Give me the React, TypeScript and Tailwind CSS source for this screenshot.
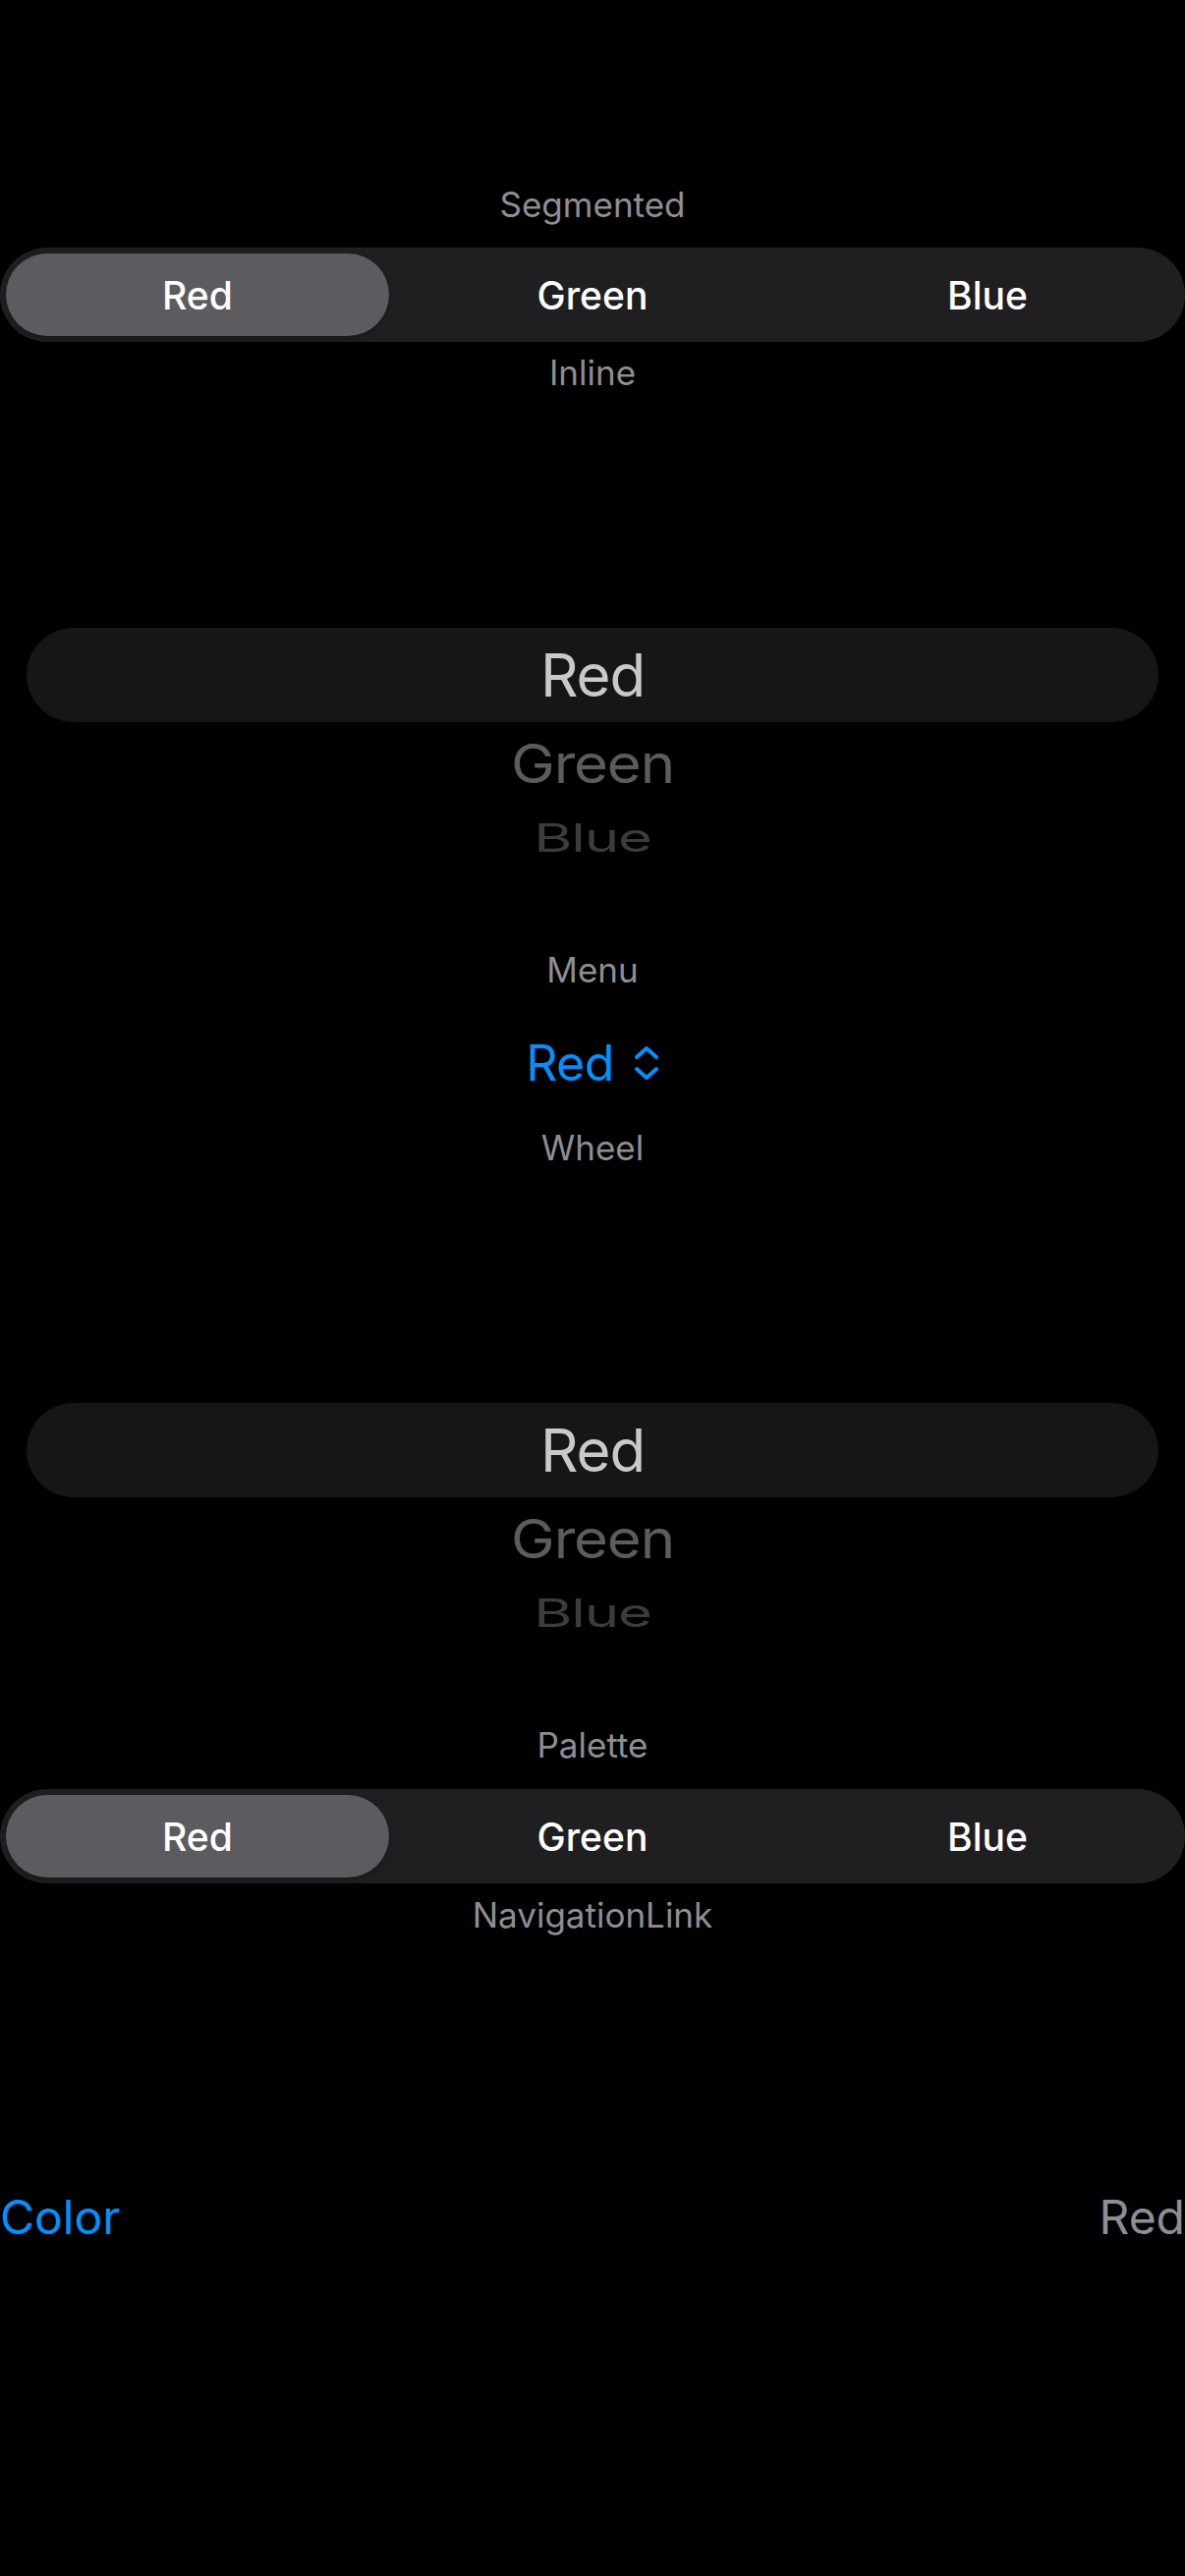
import { useState } from "react";

const colors = ["Red", "Green", "Blue"] as const;
type ColorName = (typeof colors)[number];

export default function App() {
  const [segmented, setSegmented] = useState<ColorName>("Red");
  const [palette, setPalette] = useState<ColorName>("Red");

  return (
    <main
      className="min-h-screen w-full bg-black pt-[188px] text-white antialiased"
      style={{ fontFamily: "Inter, 'Liberation Sans', sans-serif" }}
    >
      <SectionLabel>Segmented</SectionLabel>
      <div className="mt-[24px]">
        <SegmentedControl value={segmented} onChange={setSegmented} />
      </div>

      <div className="mt-[11px]">
        <SectionLabel>Inline</SectionLabel>
      </div>
      <WheelPicker selected="Red" />

      <SectionLabel>Menu</SectionLabel>
      <div className="flex h-[141px] items-center justify-center pt-[9px]">
        <button type="button" className="flex items-center gap-[20px] text-[#0091ff]">
          <span className="text-[50px] leading-none tracking-[-0.01em]">Red</span>
          <ChevronUpDown />
        </button>
      </div>

      <SectionLabel>Wheel</SectionLabel>
      <WheelPicker selected="Red" />

      <SectionLabel>Palette</SectionLabel>
      <div className="mt-[25px]">
        <SegmentedControl value={palette} onChange={setPalette} />
      </div>

      <div className="mt-[12px]">
        <SectionLabel>NavigationLink</SectionLabel>
      </div>
      <div className="mt-[248px] flex h-[80px] items-center justify-between">
        <span className="text-[48px] leading-none text-[#0091ff]">Color</span>
        <span className="text-[48px] leading-none text-[#8e8e93]">Red</span>
      </div>
    </main>
  );
}

function SectionLabel({ children }: { readonly children: string }) {
  return (
    <div className="flex h-[40px] items-center justify-center text-[35px] leading-none text-[#8e8e93]">
      {children}
    </div>
  );
}

function SegmentedControl({
  value,
  onChange,
}: {
  readonly value: ColorName;
  readonly onChange: (value: ColorName) => void;
}) {
  return (
    <div className="grid h-[96px] grid-cols-3 gap-[12px] rounded-full bg-[#1f1f21] p-[6px]">
      {colors.map((color) => (
        <button
          key={color}
          type="button"
          onClick={() => onChange(color)}
          className={`rounded-full text-[39px] font-medium leading-none text-white ${
            value === color ? "bg-[#5c5c60] shadow-[0_2px_6px_rgba(0,0,0,0.25)]" : ""
          }`}
        >
          {color}
        </button>
      ))}
    </div>
  );
}

function WheelPicker({ selected }: { readonly selected: ColorName }) {
  const rest = colors.filter((color) => color !== selected);

  return (
    <div className="flex flex-col pt-[240px] pb-[81px]">
      <div className="mx-[27px] flex h-[96px] items-center justify-center rounded-full bg-[#161618]">
        <span className="text-[60px] leading-none tracking-[-0.02em] text-[#c9c9cb]">{selected}</span>
      </div>
      <div className="flex h-[83px] items-center justify-center">
        <span className="inline-block scale-y-[0.92] text-[60px] leading-none tracking-[-0.02em] text-[#5c5c5e]">
          {rest[0]}
        </span>
      </div>
      <div className="flex h-[68px] items-center justify-center">
        <span className="inline-block scale-y-[0.67] text-[60px] leading-none tracking-[-0.02em] text-[#3c3c3e]">
          {rest[1]}
        </span>
      </div>
    </div>
  );
}

function ChevronUpDown() {
  return (
    <svg
      width="26"
      height="38"
      viewBox="0 0 26 38"
      fill="none"
      stroke="currentColor"
      strokeWidth="4"
      strokeLinecap="round"
      strokeLinejoin="round"
    >
      <polyline points="3,13 13,4 23,13" />
      <polyline points="3,25 13,34 23,25" />
    </svg>
  );
}
